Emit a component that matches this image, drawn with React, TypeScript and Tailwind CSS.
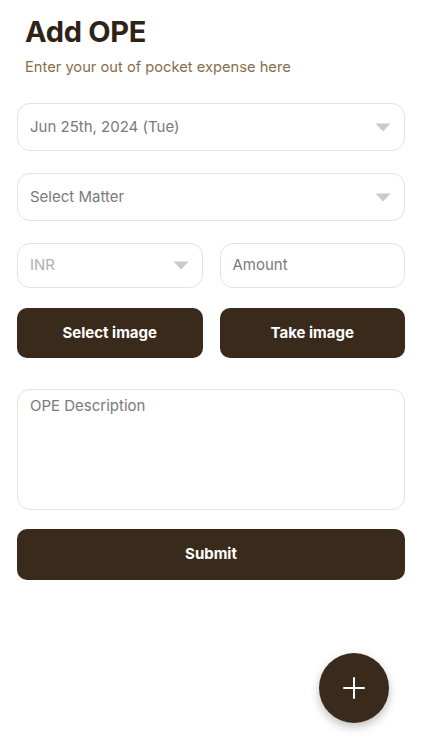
import React from "react";

function Caret() {
  return (
    <svg width="16" height="9" viewBox="0 0 16 9" className="shrink-0">
      <path d="M0.5 0.5 L15.5 0.5 L8 8.5 Z" fill="#c9c9cf" />
    </svg>
  );
}

export default function App() {
  return (
    <div
      className="relative w-[422px] h-[750px] bg-white overflow-hidden"
      style={{ fontFamily: "Inter, 'Noto Sans', sans-serif" }}
    >
      <div className="px-[17px] pt-[13px]">
        <h1 className="pl-[8px] text-[29px] leading-[38px] font-bold text-[#2e2317] tracking-[-0.3px]">
          Add OPE
        </h1>
        <p className="pl-[8px] mt-[6px] text-[14.7px] leading-[20px] text-[#8a6d4d]">
          Enter your out of pocket expense here
        </p>

        <div className="mt-[26px] h-[48px] rounded-[13px] border border-[#e3e3e3] flex items-center justify-between pl-[12px] pr-[13px]">
          <span className="text-[15px] text-[#7a7a7a]">Jun 25th, 2024 (Tue)</span>
          <Caret />
        </div>

        <div className="mt-[22px] h-[48px] rounded-[13px] border border-[#e3e3e3] flex items-center justify-between pl-[12px] pr-[13px]">
          <span className="text-[15px] text-[#7a7a7a]">Select Matter</span>
          <Caret />
        </div>

        <div className="mt-[22px] grid grid-cols-2 gap-[17px]">
          <div className="h-[45px] rounded-[13px] border border-[#e3e3e3] flex items-center justify-between pl-[12px] pr-[13px]">
            <span className="text-[15px] text-[#b0b0b0]">INR</span>
            <Caret />
          </div>
          <div className="h-[45px] rounded-[13px] border border-[#e3e3e3] flex items-center pl-[12px]">
            <span className="text-[15px] text-[#7a7a7a]">Amount</span>
          </div>
        </div>

        <div className="mt-[20px] grid grid-cols-2 gap-[17px]">
          <button className="h-[50px] rounded-[10px] bg-[#3a2a1c] text-white text-[15px] font-bold">
            Select image
          </button>
          <button className="h-[50px] rounded-[10px] bg-[#3a2a1c] text-white text-[15px] font-bold">
            Take image
          </button>
        </div>

        <div className="mt-[31px] h-[121px] rounded-[13px] border border-[#e3e3e3] pl-[12px] pt-[3px]">
          <span className="text-[15px] leading-[20px] text-[#7a7a7a]">OPE Description</span>
        </div>

        <button className="mt-[19px] w-full h-[51px] rounded-[10px] bg-[#3a2a1c] text-white text-[15px] font-bold">
          Submit
        </button>
      </div>

      <button className="absolute left-[319px] top-[653px] w-[70px] h-[70px] rounded-full bg-[#3a2a1c] flex items-center justify-center shadow-[0_4px_10px_rgba(0,0,0,0.25)]">
        <svg width="22" height="22" viewBox="0 0 22 22">
          <path d="M11 1 V21 M1 11 H21" stroke="white" strokeWidth="2" strokeLinecap="round" />
        </svg>
      </button>
    </div>
  );
}
